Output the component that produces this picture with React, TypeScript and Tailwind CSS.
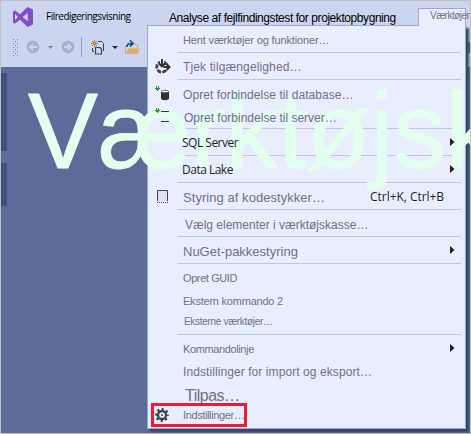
import type { ReactNode } from "react";

function Row({ h, icon, cls, dx = "", children, keys, arrow, sep, short }: {
  h: string; icon?: ReactNode; cls: string; dx?: string; children: ReactNode;
  keys?: string; arrow?: boolean; sep?: boolean; short?: boolean;
}) {
  return (
    <>
      <div className={"flex items-center " + h}>
        <div className="z-10 flex w-[35px] shrink-0 items-center pl-[5px]">{icon}</div>
        <div className={"z-10 whitespace-nowrap " + cls + " " + dx}>{children}</div>
        {keys && <div className="z-10 mr-[21px] ml-auto pt-[2px] font-['Open_Sans',sans-serif] text-[12px] tracking-[-0.05px] whitespace-nowrap text-[#1e1e1e]">{keys}</div>}
        {arrow && <svg className="z-10 mr-[10px] ml-auto" width="5" height="8"><path d="M0 0L4.5 4L0 8Z" fill="#1e1e1e" /></svg>}
      </div>
      {sep && <div className={"ml-[30px] h-px shrink-0 bg-[#bcc7e8] " + (short ? "mr-[9px]" : "mr-[4px]")} />}
    </>
  );
}

const Plug = () => <path d="M1 0h1v2h-1zM3 0h1v2h-1zM0 2h5v1h-1v1h-1v1h-1v-1h-1v-1h-1z" fill="#388a34" />;

const dark = "-ml-px font-['Open_Sans',sans-serif] text-[12px] tracking-[-0.5px] text-[#1e1e1e]";

export default function App() {
  return (
    <div className="relative h-[434px] w-[471px] overflow-hidden border border-[#c0c0c0] bg-[#5d6b99] font-['Liberation_Sans',Arial,sans-serif] text-[#716f8a]">
      <header className="h-[66px] bg-[#ccd5f0]">
        <div className="flex h-[29px] items-center">
          <svg className="mt-[3px] ml-[12px]" width="20" height="20" viewBox="0 0 20 20">
            <path fillRule="evenodd" fill="#854cc7" d="M14.5 0L20 2.4V17.6L14.5 20L7 12.7L2 16.5L0 15.5V4.5L2 3.5L7 7.3ZM14.8 5.8L9.7 10L14.8 14.2ZM2 7V13L5 10Z" />
          </svg>
          <span className="ml-[13px] w-[123px] pt-[2px] font-['Open_Sans',sans-serif] text-[10px] tracking-[-0.5px] text-black">Filredigeringsvisning</span>
          <span className="mt-[4px] text-[12px] tracking-[-0.43px] whitespace-nowrap text-black">Analyse af fejlfindingstest for projektopbygning</span>
        </div>
        <div className="flex h-[34px] items-center">
          <svg className="ml-[12px]" width="6" height="17" fill="#707d9f">
            {[0, 4, 8, 12, 16].map((y) => <g key={y}><rect y={y} width="1" height="1" /><rect x="4" y={y} width="1" height="1" /><rect x="2" y={y + 2} width="1" height="1" /></g>)}
          </svg>
          <svg className="ml-[7px]" width="14" height="14" fill="none"><circle cx="7" cy="7" r="6.2" fill="#a7b0c9" /><path d="M11 7H4M7 4L4 7L7 10" stroke="#ccd5f0" strokeWidth="1.8" /></svg>
          <svg className="ml-[8px]" width="5" height="3"><path d="M0 0H5L2.5 3Z" fill="#808080" /></svg>
          <svg className="ml-[8px]" width="14" height="14" fill="none"><circle cx="7" cy="7" r="6.2" fill="#a7b0c9" /><path d="M3 7H10M7 4L10 7L7 10" stroke="#ccd5f0" strokeWidth="1.8" /></svg>
          <div className="ml-[6px] h-5 w-px bg-[#8f9dc6]" />
          <svg className="ml-[9px]" width="14" height="15" fill="none">
            <path d="M7 1.5H10.5L12.5 3.5V11M1.5 8V11.5H3" stroke="#424242" />
            <path d="M4.5 14V7.5H9L10.5 9V14Z" fill="#ccd5f0" stroke="#424242" strokeWidth="1.2" />
            <path d="M3.5 0V7M0 3.5H7M1 1L6 6M6 1L1 6" stroke="#c27d1a" /><rect x="3" y="3" width="1" height="1" fill="#ccd5f0" />
          </svg>
          <svg className="ml-[7px]" width="6" height="3"><path d="M0 0H6L3 3Z" fill="#1b293e" /></svg>
          <svg className="ml-[7px]" width="15" height="15" fill="none">
            <path d="M.5 13.5V5.5H3M9 4.5H12.5V8" stroke="#d9a95f" />
            <path d="M1 14L3 8.5H14.5L12.5 14Z" fill="#dcae68" />
            <path d="M2 7C2 3.5 4 3.5 7 3.5M5 .5L8 3.5L5 6.5" stroke="#00539c" strokeWidth="1.7" />
          </svg>
        </div>
      </header>
      <div className="flex w-[6px] flex-col gap-3 pt-[6px]">
        <div className="h-[78px] bg-[#40507f]" />
        <div className="h-[43px] bg-[#40507f]" />
      </div>
      <div className="absolute top-[41px] left-[467px] h-[11px] w-[2px] bg-[#388a34]" />

      <div className="absolute top-[24px] left-[146px] h-[404px] w-[319px] border border-[#9ba7cf] bg-[#e9eefe] shadow-[3px_3px_2px_#36436d]">
        <div className="absolute -top-[18px] left-[270px] h-[18px] w-[48px] border border-b-0 border-[#9ba7cf] bg-[#e9eefe]">
          <span className="absolute top-0 left-[11px] text-[10px] leading-[14px] tracking-[-0.5px] whitespace-nowrap">Værktøjer</span>
        </div>
        <div className="absolute top-[46px] left-[-120px] origin-[0_96px] scale-y-[1.03] text-[105px] leading-[120px] tracking-[-0.3px] whitespace-nowrap text-[#e3ffed] [-webkit-text-stroke:0.8px_#e3ffed]">Værktøjsk</div>
        <div className="flex flex-col">
          <Row h="h-[26px]" cls="text-[11px] tracking-[-0.14px]" dx="pt-[3px]" sep>Hent værktøjer og funktioner…</Row>
          <Row h="h-[26px]" cls="text-[12px] tracking-[0.13px]" dx="pt-[2px]" sep icon={
            <svg className="ml-[2px]" width="16" height="15" fill="none">
              <circle cx="7" cy="8" r="5.2" stroke="#424242" strokeWidth="2.8" strokeDasharray="4.2 1.24" strokeDashoffset="2" />
              <path d="M7 1V7M9 8H14" stroke="#e9eefe" strokeWidth="4" />
              <path d="M7 0V7M4 4.5L7 7.5L10 4.5M8.5 8H14M11.5 5L14.5 8L11.5 11" stroke="#303030" strokeWidth="1.9" />
            </svg>}>Tjek tilgængelighed…</Row>
          <Row h="h-[27px]" cls="text-[12px] tracking-[0.06px]" dx="pt-[3px]" icon={
            <svg className="ml-[2px]" width="15" height="15"><Plug /><path d="M6 5.5V13Q10 15.5 14 13V5.5Z" fill="#303030" /><ellipse cx="10" cy="5.5" rx="3.6" ry="1.3" fill="#f4f4fa" stroke="#424242" strokeWidth=".7" /></svg>}>Opret forbindelse til database…</Row>
          <Row h="h-[21px]" cls="text-[12px] ml-px" icon={
            <svg className="-mt-[5px] ml-[2px]" width="15" height="14"><Plug /><path d="M6 3h8v1H6zM6 13h8v1H6z" fill="#303030" /></svg>} sep short>Opret forbindelse til server…</Row>
          <Row h="h-[26px]" cls={dark} dx="pt-[2px]" sep short arrow>SQL Server</Row>
          <Row h="h-[26px]" cls={dark} dx="pt-[2px]" sep arrow>Data Lake</Row>
          <Row h="h-[26px]" cls="text-[13px] tracking-[0.05px]" dx="pt-[3px]" keys="Ctrl+K, Ctrl+B" sep icon={<svg className="ml-[4px]" width="11" height="13"><path d="M.5 11V.5H10.5V11" fill="#e0e0f8" stroke="#424242" /><path d="M0 12.5H11" stroke="#424242" strokeDasharray="1 1" /></svg>}>Styring af kodestykker…</Row>
          <Row h="h-[26px]" cls="text-[12px] ml-[2px]" dx="pt-[3px]" sep>Vælg elementer i værktøjskasse…</Row>
          <Row h="h-[26px]" cls="text-[13px]" dx="pt-[3px]" arrow sep>NuGet-pakkestyring</Row>
          <Row h="h-[27px]" cls="text-[11px] tracking-[-0.4px]" dx="pt-[2px]">Opret GUID</Row>
          <Row h="h-[20px]" cls="text-[11px] tracking-[-0.22px]">Ekstern kommando 2</Row>
          <Row h="h-[23px]" cls="text-[10px] tracking-[-0.3px] ml-px" dx="pb-[2px]" sep>Eksterne værktøjer…</Row>
          <Row h="h-[26px]" cls="text-[11px] tracking-[-0.38px]" dx="pt-[2px]" arrow>Kommandolinje</Row>
          <Row h="h-[22px]" cls="text-[12px] tracking-[0.08px]">Indstillinger for import og eksport…</Row>
          <Row h="h-[20px]" cls="text-[16px] tracking-[-0.5px] ml-[2px]" dx="pt-[6px]">Tilpas…</Row>
          <div className="z-10 ml-[3px] flex h-[24px] w-[96px] items-center border-[3px] border-[#ed1c35]">
            <svg className="ml-[1px] shrink-0" width="14" height="14" viewBox="-7 -7 14 14" fill="none" stroke="#424242"><circle r="4" strokeWidth="2.3" /><circle r="5.8" strokeWidth="2.2" strokeDasharray="2.2 2.355" strokeDashoffset="1.1" /><circle r="1" fill="#424242" stroke="none" /></svg>
            <span className="ml-[14px] text-[11px] tracking-[-0.38px] whitespace-nowrap">Indstillinger…</span>
          </div>
        </div>
      </div>
    </div>
  );
}
